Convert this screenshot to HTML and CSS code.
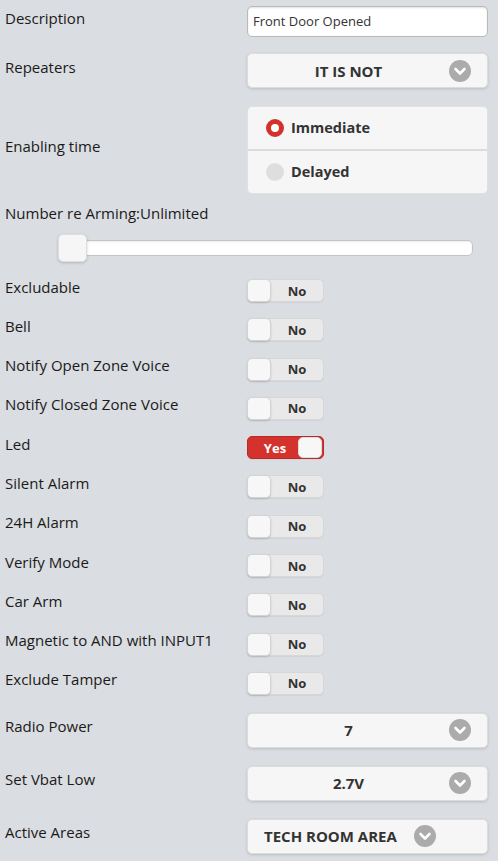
FILE: index.html
```html
<!DOCTYPE html>
<html>
<head>
<meta charset="utf-8">
<link rel="stylesheet" href="styles.css">
</head>
<body>
<div class="form">
  <div class="row row-input">
    <div class="label">Description</div>
    <div class="ctl"><div class="text-input">Front Door Opened</div></div>
  </div>
  <div class="row row-select">
    <div class="label">Repeaters</div>
    <div class="ctl"><div class="select"><span class="sel-text">IT IS NOT</span><span class="chev"><svg viewBox="0 0 22 22" width="22" height="22"><circle cx="11" cy="11" r="11" fill="#ababab"/><path d="M6.5 9 L11 13.5 L15.5 9" fill="none" stroke="#fff" stroke-width="2.6" stroke-linecap="round" stroke-linejoin="round"/></svg></span></div></div>
  </div>
  <div class="row row-radio">
    <div class="label">Enabling time</div>
    <div class="ctl">
      <div class="radio-group">
        <div class="radio-opt"><span class="dot on"></span><span class="opt-text">Immediate</span></div>
        <div class="radio-opt"><span class="dot"></span><span class="opt-text">Delayed</span></div>
      </div>
    </div>
  </div>
  <div class="slider-label">Number re Arming:Unlimited</div>
  <div class="slider">
    <div class="track"></div>
    <div class="handle"></div>
  </div>
  <div class="toggles">
    <div class="row row-toggle"><div class="label">Excludable</div><div class="ctl"><div class="toggle"><span class="knob"></span><span class="tog-text">No</span></div></div></div>
    <div class="row row-toggle"><div class="label">Bell</div><div class="ctl"><div class="toggle"><span class="knob"></span><span class="tog-text">No</span></div></div></div>
    <div class="row row-toggle"><div class="label">Notify Open Zone Voice</div><div class="ctl"><div class="toggle"><span class="knob"></span><span class="tog-text">No</span></div></div></div>
    <div class="row row-toggle"><div class="label">Notify Closed Zone Voice</div><div class="ctl"><div class="toggle"><span class="knob"></span><span class="tog-text">No</span></div></div></div>
    <div class="row row-toggle"><div class="label">Led</div><div class="ctl"><div class="toggle toggle-on"><span class="tog-text">Yes</span><span class="knob"></span></div></div></div>
    <div class="row row-toggle"><div class="label">Silent Alarm</div><div class="ctl"><div class="toggle"><span class="knob"></span><span class="tog-text">No</span></div></div></div>
    <div class="row row-toggle"><div class="label">24H Alarm</div><div class="ctl"><div class="toggle"><span class="knob"></span><span class="tog-text">No</span></div></div></div>
    <div class="row row-toggle"><div class="label">Verify Mode</div><div class="ctl"><div class="toggle"><span class="knob"></span><span class="tog-text">No</span></div></div></div>
    <div class="row row-toggle"><div class="label">Car Arm</div><div class="ctl"><div class="toggle"><span class="knob"></span><span class="tog-text">No</span></div></div></div>
    <div class="row row-toggle"><div class="label">Magnetic to AND with INPUT1</div><div class="ctl"><div class="toggle"><span class="knob"></span><span class="tog-text">No</span></div></div></div>
    <div class="row row-toggle"><div class="label">Exclude Tamper</div><div class="ctl"><div class="toggle"><span class="knob"></span><span class="tog-text">No</span></div></div></div>
  </div>
  <div class="selects">
    <div class="row row-select">
      <div class="label">Radio Power</div>
      <div class="ctl"><div class="select"><span class="sel-text">7</span><span class="chev"><svg viewBox="0 0 22 22" width="22" height="22"><circle cx="11" cy="11" r="11" fill="#ababab"/><path d="M6.5 9 L11 13.5 L15.5 9" fill="none" stroke="#fff" stroke-width="2.6" stroke-linecap="round" stroke-linejoin="round"/></svg></span></div></div>
    </div>
    <div class="row row-select">
      <div class="label">Set Vbat Low</div>
      <div class="ctl"><div class="select"><span class="sel-text">2.7V</span><span class="chev"><svg viewBox="0 0 22 22" width="22" height="22"><circle cx="11" cy="11" r="11" fill="#ababab"/><path d="M6.5 9 L11 13.5 L15.5 9" fill="none" stroke="#fff" stroke-width="2.6" stroke-linecap="round" stroke-linejoin="round"/></svg></span></div></div>
    </div>
    <div class="row row-select">
      <div class="label">Active Areas</div>
      <div class="ctl"><div class="select select-inline"><span class="sel-text">TECH ROOM AREA</span><span class="chev"><svg viewBox="0 0 22 22" width="22" height="22"><circle cx="11" cy="11" r="11" fill="#ababab"/><path d="M6.5 9 L11 13.5 L15.5 9" fill="none" stroke="#fff" stroke-width="2.6" stroke-linecap="round" stroke-linejoin="round"/></svg></span></div></div>
    </div>
  </div>
</div>
</body>
</html>
```
FILE: styles.css
```css
html, body {
  margin: 0;
  padding: 0;
  background: #dadde1;
}
body {
  font-family: "Open Sans", "Noto Sans", sans-serif;
  font-size: 15px;
  color: #1a1a1a;
  width: 498px;
  height: 861px;
  overflow: hidden;
}
.form {
  padding: 6px 10px 0 5px;
}
.row {
  display: flex;
  align-items: center;
}
.label {
  flex: 0 0 242px;
  padding-bottom: 8px;
  line-height: 20px;
  white-space: nowrap;
}
.ctl {
  flex: 0 0 241px;
}
.text-input {
  box-sizing: border-box;
  height: 31px;
  background: #fff;
  border: 1px solid #b9b9b9;
  border-radius: 5px;
  box-shadow: inset 0 1px 2px rgba(0,0,0,0.12);
  padding: 0 5px;
  font-size: 13px;
  line-height: 29px;
  color: #333;
}
.row-input { margin-bottom: 16px; }
.row-select { margin-bottom: 18px; }
.select {
  box-sizing: border-box;
  height: 35px;
  background: #f6f6f6;
  border: 1px solid #dcdcdc;
  border-radius: 5px;
  box-shadow: 0 1px 3px rgba(0,0,0,0.15);
  display: flex;
  align-items: center;
  position: relative;
  padding: 0 38px 0 0;
}
.sel-text {
  flex: 1;
  text-align: center;
  font-weight: 700;
  font-size: 15px;
  color: #333;
}
.chev {
  position: absolute;
  right: 16px;
  top: 50%;
  margin-top: -11px;
  width: 22px;
  height: 22px;
}
.chev svg { display: block; }
.select-inline {
  justify-content: flex-start;
  padding: 0 0 0 16px;
}
.select-inline .sel-text {
  flex: 0 0 auto;
}
.select-inline .chev {
  position: static;
  margin: 0 0 0 17px;
}
.row-radio { margin-bottom: 0; }
.radio-group {
  box-sizing: border-box;
  height: 88px;
  background: #f6f6f6;
  border: 1px solid #e0e0e0;
  border-radius: 5px;
  display: flex;
  flex-direction: column;
}
.radio-opt {
  flex: 1;
  display: flex;
  align-items: center;
  padding-left: 18px;
}
.radio-opt + .radio-opt {
  border-top: 2px solid #dcdcdc;
}
.dot {
  box-sizing: border-box;
  width: 18px;
  height: 18px;
  border-radius: 50%;
  background: #dedede;
  margin-right: 7px;
}
.dot.on {
  background: #fff;
  border: 5px solid #d1322c;
}
.opt-text {
  font-weight: 700;
  font-size: 14.5px;
  color: #333;
  padding-bottom: 2px;
}
.slider-label {
  margin-top: 9px;
  line-height: 20px;
}
.slider {
  position: relative;
  height: 28px;
  margin: 11px 15px 0 53px;
  display: flex;
  align-items: center;
}
.track {
  flex: 1;
  box-sizing: border-box;
  height: 16px;
  background: #fff;
  border: 1px solid #c4c4c4;
  border-radius: 5px;
  box-shadow: inset 0 1px 2px rgba(0,0,0,0.08);
}
.handle {
  position: absolute;
  left: 0;
  top: 0;
  box-sizing: border-box;
  width: 29px;
  height: 28px;
  background: #f6f6f6;
  border: 1px solid #dedede;
  border-radius: 5px;
  box-shadow: 0 1px 3px rgba(0,0,0,0.18);
}
.toggles {
  margin-top: 17px;
  display: flex;
  flex-direction: column;
  gap: 16.3px;
  margin-bottom: 18px;
}
.row-toggle { height: 23px; }
.toggle {
  box-sizing: border-box;
  width: 77px;
  height: 23px;
  background: #e9e9e9;
  border: 1px solid #d7d7d7;
  border-radius: 5px;
  display: flex;
  align-items: center;
  box-shadow: 0 1px 1px rgba(0,0,0,0.05);
}
.knob {
  box-sizing: border-box;
  width: 24px;
  height: 23px;
  margin: -1px 0 -1px -1px;
  background: #f7f7f7;
  border: 1px solid #d4d4d4;
  border-radius: 5px;
  box-shadow: 0 1px 2px rgba(0,0,0,0.15);
}
.tog-text {
  flex: 1;
  text-align: center;
  font-weight: 700;
  font-size: 13px;
  color: #333;
}
.toggle-on {
  background: #d3322d;
  border-color: #b82a25;
}
.toggle-on .tog-text { color: #fff; padding-left: 4px; }
.toggle-on .knob {
  margin: 0 1px 0 0;
  height: 21px;
  border-color: #ddd;
  box-shadow: none;
}
.selects .row-select:last-child { margin-bottom: 0; }
```
